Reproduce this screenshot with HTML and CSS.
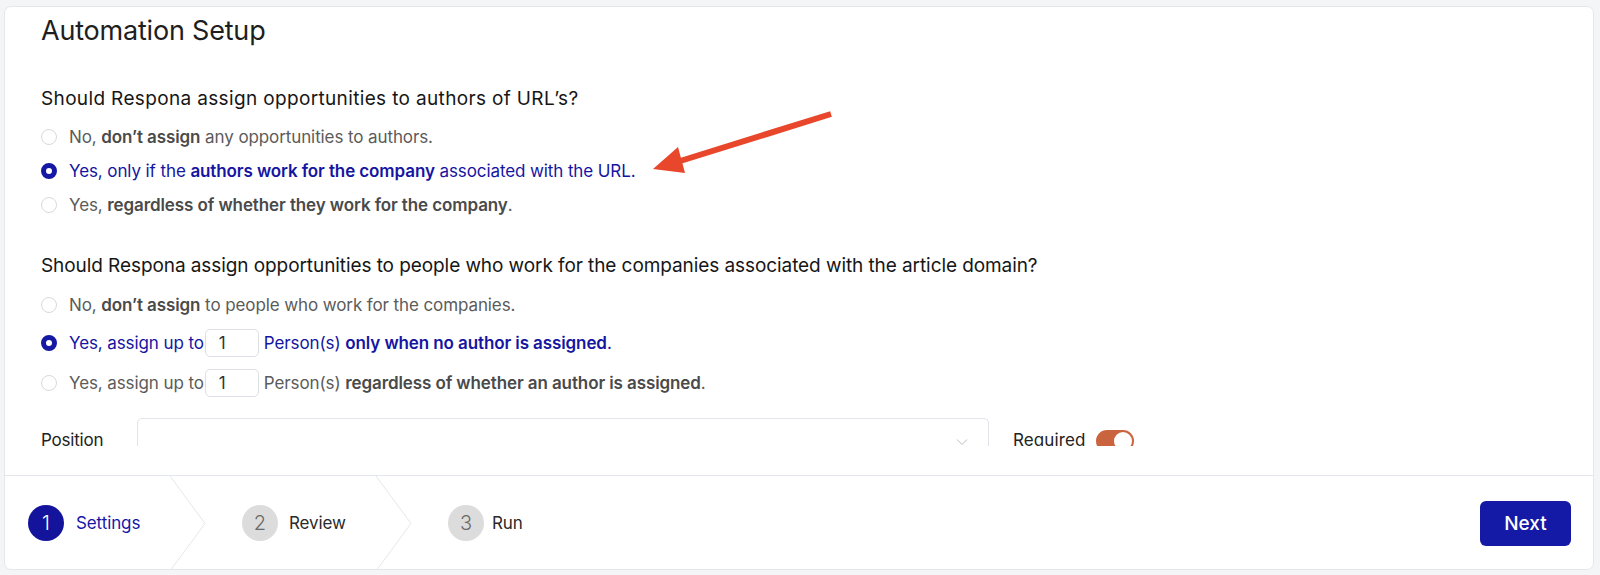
FILE: index.html
```html
<!DOCTYPE html>
<html lang="en">
<head>
<meta charset="utf-8">
<title>Automation Setup</title>
<link rel="stylesheet" href="styles.css">
</head>
<body>
<div class="card">
  <div class="content">
    <div class="scroll">
      <h1 class="title">Automation Setup</h1>

      <p class="question q1">Should Respona assign opportunities to authors of URL’s?</p>
      <div class="options">
        <div class="option">
          <span class="radio"></span>
          <span class="label">No, <b>don’t assign</b> any opportunities to authors.</span>
        </div>
        <div class="option selected">
          <span class="radio"></span>
          <span class="label">Yes, only if the <b>authors work for the company</b> associated with the URL.</span>
        </div>
        <div class="option">
          <span class="radio"></span>
          <span class="label">Yes, <b>regardless of whether they work for the company</b>.</span>
        </div>
      </div>

      <p class="question q2">Should Respona assign opportunities to people who work for the companies associated with the article domain?</p>
      <div class="options options2">
        <div class="option">
          <span class="radio"></span>
          <span class="label">No, <b>don’t assign</b> to people who work for the companies.</span>
        </div>
        <div class="option selected tall">
          <span class="radio"></span>
          <span class="label">Yes, assign up to</span>
          <span class="num">1</span>
          <span class="label">Person(s) <b>only when no author is assigned</b>.</span>
        </div>
        <div class="option tall">
          <span class="radio"></span>
          <span class="label">Yes, assign up to</span>
          <span class="num">1</span>
          <span class="label">Person(s) <b>regardless of whether an author is assigned</b>.</span>
        </div>
      </div>

      <div class="position-row">
        <span class="pos-label">Position</span>
        <div class="select">
          <svg class="select-chev" width="12" height="8" viewBox="0 0 12 8"><path d="M1 1.5 L6 6.5 L11 1.5" fill="none" stroke="#b8bcc4" stroke-width="1"/></svg>
        </div>
        <span class="req-label">Required</span>
        <span class="toggle"><span class="knob"></span></span>
      </div>
    </div>

    <svg class="arrow" width="200" height="80" viewBox="640 100 200 80">
      <line x1="830" y1="114" x2="676" y2="162" stroke="#e8472b" stroke-width="6" stroke-linecap="butt"/>
      <polygon points="652,169 677,147 684,173" fill="#e8472b"/>
    </svg>
  </div>

  <div class="footer">
    <div class="steps">
      <div class="step step1 active">
        <span class="circle">1</span>
        <span class="step-label">Settings</span>
      </div>
      <svg class="chev" width="36" height="95" viewBox="0 0 36 95"><path d="M0 0 L35 47.5 L0 95" fill="none" stroke="#e4e7eb" stroke-width="1"/></svg>
      <div class="step step2">
        <span class="circle">2</span>
        <span class="step-label">Review</span>
      </div>
      <svg class="chev" width="36" height="95" viewBox="0 0 36 95"><path d="M0 0 L35 47.5 L0 95" fill="none" stroke="#e4e7eb" stroke-width="1"/></svg>
      <div class="step step3">
        <span class="circle">3</span>
        <span class="step-label">Run</span>
      </div>
    </div>
    <button class="next">Next</button>
  </div>
</div>
</body>
</html>
```

FILE: styles.css
```css
* { box-sizing: border-box; }

html, body {
  margin: 0;
  padding: 0;
  background: #f4f5f7;
  font-family: "Inter", "Liberation Sans", sans-serif;
}

.card {
  margin: 6px 6px 0 4px;
  height: 564px;
  background: #fff;
  border: 1px solid #e4e7eb;
  border-radius: 7px;
  display: flex;
  flex-direction: column;
}

.content {
  position: relative;
  height: 468px;
  padding-bottom: 29px;
}

.scroll {
  height: 439px;
  overflow: hidden;
  padding: 9px 0 0 36px;
}

.title {
  margin: 0;
  font-size: 27px;
  line-height: 30px;
  font-weight: 400;
  color: #1e1e1e;
  letter-spacing: -0.2px;
}

.question {
  margin: 0;
  font-size: 19px;
  line-height: 24px;
  color: #161616;
  letter-spacing: -0.08px;
}

.q1 { margin-top: 41px; letter-spacing: 0.35px; }
.q2 { margin-top: 37px; }

.options {
  display: flex;
  flex-direction: column;
  gap: 10px;
  margin-top: 14px;
}

.options2 {
  margin-top: 15px;
  gap: 12px;
}

.option {
  display: flex;
  align-items: center;
  height: 24px;
  font-size: 17px;
  color: #5b5b5b;
  letter-spacing: -0.1px;
}

.option.tall { height: 28px; }

.option b {
  font-weight: 600;
  color: #4a4a4a;
}

.option.selected,
.option.selected b {
  color: #1515a2;
}

.radio {
  width: 16px;
  height: 16px;
  border-radius: 50%;
  border: 1px solid #d6d9de;
  margin-right: 12px;
  flex: none;
  background: #fff;
}

.option.selected .radio {
  border: 5px solid #1518a3;
  background: #fff;
}

.num {
  display: inline-flex;
  align-items: center;
  width: 54px;
  height: 28px;
  border: 1px solid #dcdfe4;
  border-radius: 5px;
  padding-left: 13px;
  margin: 0 5px 0 1px;
  color: #333;
  font-size: 17px;
}

.position-row {
  display: flex;
  align-items: center;
  margin-top: 21px;
  height: 46px;
}

.pos-label {
  width: 96px;
  font-size: 17px;
  line-height: 16px;
  margin-top: -2px;
  color: #222;
  letter-spacing: -0.2px;
}

.select {
  width: 852px;
  height: 46px;
  border: 1px solid #e1e4e8;
  border-radius: 5px;
  display: flex;
  align-items: center;
  justify-content: flex-end;
  padding-right: 20px;
}

.select-chev { margin-top: 2px; }

.req-label {
  margin-left: 24px;
  font-size: 17px;
  line-height: 16px;
  margin-top: -2px;
  color: #222;
  letter-spacing: 0.1px;
}

.toggle {
  margin-left: 11px;
  width: 38px;
  height: 22px;
  border-radius: 11px;
  background: #c9643e;
  position: relative;
}

.toggle .knob {
  position: absolute;
  right: 2px;
  top: 2px;
  width: 18px;
  height: 18px;
  border-radius: 50%;
  background: #fff;
}

.arrow {
  position: absolute;
  left: 636px;
  top: 93px;
}

.footer {
  height: 95px;
  border-top: 1px solid #e4e7eb;
  display: flex;
  align-items: center;
  justify-content: space-between;
  padding-right: 22px;
}

.steps {
  display: flex;
  align-items: center;
  height: 100%;
}

.step {
  display: flex;
  align-items: center;
  gap: 12px;
  height: 100%;
}

.step1 { width: 165px; padding-left: 23px; }
.step2 { width: 170px; padding-left: 36px; gap: 11px; }
.step3 { width: 120px; padding-left: 36px; gap: 8px; }

.chev { flex: none; display: block; }

.circle {
  width: 36px;
  height: 36px;
  border-radius: 50%;
  background: #dcdcdc;
  color: #6a6a6a;
  display: flex;
  align-items: center;
  justify-content: center;
  font-size: 20px;
  font-weight: 300;
  flex: none;
}

.step.active .circle {
  background: #13139c;
  color: #fff;
}

.step-label {
  font-size: 17px;
  color: #2a2a2a;
  letter-spacing: -0.1px;
}

.step.active .step-label { color: #1717a8; }

.next {
  width: 91px;
  height: 45px;
  border: none;
  border-radius: 6px;
  background: #1419a6;
  color: #fff;
  font-family: "Inter", sans-serif;
  font-size: 19px;
  font-weight: 500;
  cursor: pointer;
}
```
